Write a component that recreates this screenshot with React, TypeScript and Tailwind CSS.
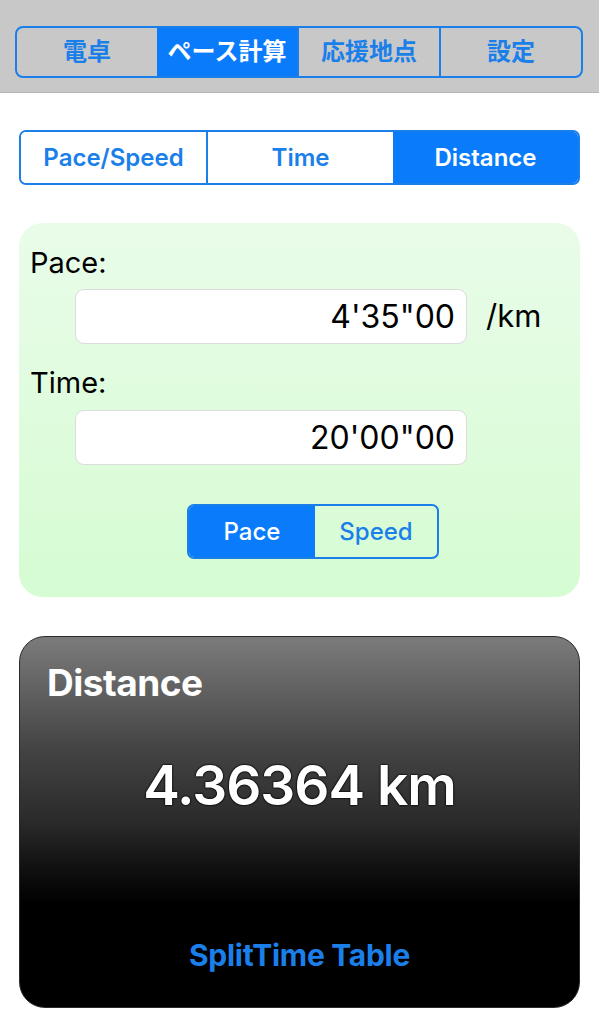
import React from "react";

const font = { fontFamily: 'Inter, "Noto Sans CJK JP", "Noto Sans", sans-serif' };

export default function App() {
  const top = ["電卓", "ペース計算", "応援地点", "設定"];
  const mode = ["Pace/Speed", "Time", "Distance"];
  return (
    <div className="w-[599px] h-[1024px] bg-white overflow-hidden" style={font}>
      <div className="h-[93px] bg-[#c8c8c8] border-b border-[#b5b5b5] pt-[26px] px-[15px] box-border">
        <div className="flex h-[52px] w-[568px] rounded-[8px] border-2 border-[#1b7fe9] overflow-hidden">
          {top.map((t, i) => (
            <div
              key={t}
              className={`flex-1 flex items-center justify-center text-[24px] font-semibold ${
                i === 1 ? "bg-[#0a7cfb] text-white" : "text-[#1b7fe9]"
              } ${i > 1 ? "border-l-2 border-[#1b7fe9]" : ""}`}
            >
              {t}
            </div>
          ))}
        </div>
      </div>

      <div className="px-[19px] pt-[37px]">
        <div className="flex h-[55px] rounded-[7px] border-2 border-[#1b7fe9] overflow-hidden">
          {mode.map((t, i) => (
            <div
              key={t}
              className={`flex-1 flex items-center justify-center text-[24px] font-semibold ${
                i === 2 ? "bg-[#0a7cfb] text-white" : "text-[#1b7fe9] bg-white"
              } ${i === 1 ? "border-l-2 border-[#1b7fe9]" : ""}`}
            >
              {t}
            </div>
          ))}
        </div>

        <div className="mt-[38px] h-[374px] rounded-[24px] bg-gradient-to-b from-[#e9fce9] to-[#d5fcd2] px-[11px] pt-[22px]">
          <div className="text-[29px] leading-[36px] text-black">Pace:</div>
          <div className="flex items-center mt-[8px]">
            <div className="ml-[45px] w-[392px] h-[55px] bg-white rounded-[9px] border border-[#dcdcdc] flex items-center justify-end pr-[11px] text-[32px] text-black">
              4'35"00
            </div>
            <div className="ml-[19px] text-[31px] text-black">/km</div>
          </div>
          <div className="text-[29px] leading-[36px] text-black mt-[21px]">Time:</div>
          <div className="flex items-center mt-[9px]">
            <div className="ml-[45px] w-[392px] h-[55px] bg-white rounded-[9px] border border-[#dcdcdc] flex items-center justify-end pr-[11px] text-[32px] text-black">
              20'00"00
            </div>
          </div>
          <div className="flex mt-[39px]">
            <div className="flex w-[252px] h-[55px] rounded-[7px] border-2 border-[#1b7fe9] overflow-hidden ml-[157px]">
              <div className="w-[126px] flex items-center justify-center bg-[#0a7cfb] text-white text-[24px] font-medium">
                Pace
              </div>
              <div className="flex-1 flex items-center justify-center text-[#1b7fe9] text-[24px] font-medium">
                Speed
              </div>
            </div>
          </div>
        </div>

        <div
          className="mt-[39px] h-[372px] rounded-[26px] border border-[#2a2a2a] flex flex-col"
          style={{
            background:
              "linear-gradient(to bottom, #7b7b7b 0%, #444444 30%, #2a2a2a 50%, #111111 62%, #000000 72%, #000000 100%)",
          }}
        >
          <div className="pl-[27px] pt-[24px] text-[37px] font-bold text-white leading-[44px] tracking-[-0.5px]">Distance</div>
          <div
            className="mt-[48px] text-center text-[55px] font-semibold text-white leading-[64px] tracking-[-1px]"
            style={{ textShadow: "0 0 2px #000, 0 0 2px #000, 0 0 1px #000" }}
          >
            4.36364 km
          </div>
          <div className="mt-auto mb-[32px] text-center text-[30px] font-bold text-[#1b7fe9] leading-[40px] tracking-[-0.3px]">
            SplitTime Table
          </div>
        </div>
      </div>
    </div>
  );
}
